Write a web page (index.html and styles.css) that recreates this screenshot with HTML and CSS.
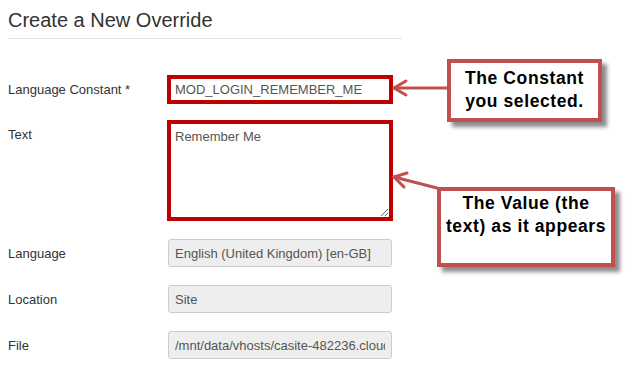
FILE: index.html
```html
<!DOCTYPE html>
<html lang="en">
<head>
  <meta charset="UTF-8" />
  <title>Create a New Override</title>
  <link rel="stylesheet" href="styles.css">
</head>
<body>

  <div class="page">
    <h2 class="page-title">Create a New Override</h2>

    <form class="override-form">
      <div class="control-group">
        <label class="control-label">Language Constant <span class="star">*</span></label>
        <div class="controls">
          <input type="text" class="field field-marked" value="MOD_LOGIN_REMEMBER_ME">
        </div>
      </div>

      <div class="control-group">
        <label class="control-label">Text</label>
        <div class="controls">
          <textarea class="field field-marked field-text">Remember Me</textarea>
        </div>
      </div>

      <div class="control-group">
        <label class="control-label">Language</label>
        <div class="controls">
          <input type="text" class="field" value="English (United Kingdom) [en-GB]" disabled>
        </div>
      </div>

      <div class="control-group">
        <label class="control-label">Location</label>
        <div class="controls">
          <input type="text" class="field" value="Site" disabled>
        </div>
      </div>

      <div class="control-group">
        <label class="control-label">File</label>
        <div class="controls">
          <input type="text" class="field" value="/mnt/data/vhosts/casite-482236.cloudaccess.net/httpdocs/language/overrides/en-GB.override.ini" disabled>
        </div>
      </div>
    </form>

    <!-- annotations laid over the form -->
    <div class="callout callout-constant">The Constant<br>you selected.</div>
    <div class="callout callout-value">The Value (the<br>text) as it appears</div>

    <svg class="arrows" width="630" height="369" viewBox="0 0 630 369">
      <g stroke="#c0504d" stroke-width="3" stroke-linecap="round" fill="none">
        <line x1="447" y1="88" x2="394" y2="88" />
        <polyline points="406,81 394,88 406,95" />
        <line x1="437" y1="188" x2="394" y2="177" />
        <polyline points="407,173 394,177 404,187" />
      </g>
    </svg>
  </div>

</body>
</html>
```

FILE: styles.css
```css
body {
  margin: 0;
  font-family: "Liberation Sans", Arial, sans-serif;
  font-size: 13px;
  line-height: 18px;
  color: #333;
  background-color: #fff;
}
.page {
  position: relative;
  width: 630px;
  height: 369px;
  padding: 5px 0 0 8px;
  box-sizing: border-box;
}
.page-title {
  width: 394px;
  margin: 0 0 36px;
  padding-bottom: 3px;
  font-size: 20px;
  font-weight: normal;
  line-height: 30px;
  color: #333;
  border-bottom: 1px solid #e5e5e5;
}
.control-group {
  display: flex;
  margin-bottom: 18px;
}
.control-group:first-child {
  margin-bottom: 16px;
}
.control-label {
  width: 159px;
  padding-top: 6px;
}
.field {
  display: block;
  box-sizing: border-box;
  width: 224px;
  height: 28px;
  margin: 0 0 0 1px;
  padding: 4px 6px;
  font-family: inherit;
  font-size: 13px;
  line-height: 18px;
  color: #555;
  background-color: #eee;
  border: 1px solid #ccc;
  border-radius: 3px;
}
.field-marked {
  width: 226px;
  height: 29px;
  margin-left: 0;
  padding: 3px 4px;
  background-color: #fff;
  border: 4px solid #c00000;
  border-radius: 0;
  color: #555;
}
.field-text {
  height: 101px;
  padding: 4px 4px;
  resize: vertical;
}
.callout {
  position: absolute;
  box-sizing: border-box;
  border: 4px solid #c0504d;
  background-color: #fff;
  font-weight: bold;
  font-size: 17.5px;
  line-height: 23px;
  letter-spacing: 0.6px;
  color: #000;
  text-align: center;
  box-shadow: 5px 5px 4px rgba(0, 0, 0, 0.45);
}
.callout-constant {
  left: 447px;
  top: 59px;
  width: 155px;
  height: 63px;
  padding-top: 4px;
}
.callout-value {
  left: 437px;
  top: 187px;
  width: 178px;
  height: 80px;
  padding-top: 1px;
}
.arrows {
  position: absolute;
  left: 0;
  top: 0;
  pointer-events: none;
}
```
